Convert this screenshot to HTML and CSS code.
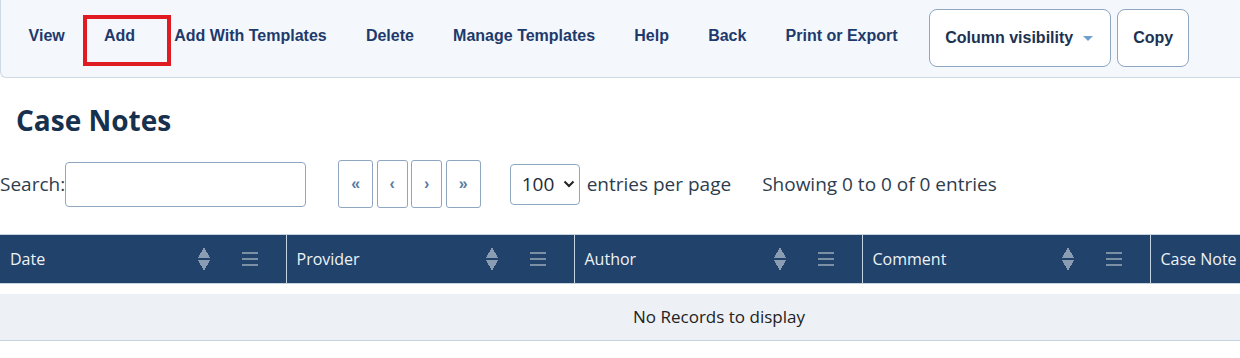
FILE: index.html
```html
<!DOCTYPE html>
<html lang="en">
<head>
    <meta charset="UTF-8">
    <meta name="viewport" content="width=device-width, initial-scale=1.0">
    <title>Case Notes</title>
    <link rel="stylesheet" href="styles.css">
</head>
<body>
    <div class="toolbar">
        <a class="nav-link" href="#">View</a>
        <a class="nav-link active" href="#">Add</a>
        <a class="nav-link" href="#">Add With Templates</a>
        <a class="nav-link" href="#">Delete</a>
        <a class="nav-link" href="#">Manage Templates</a>
        <a class="nav-link" href="#">Help</a>
        <a class="nav-link" href="#">Back</a>
        <a class="nav-link" href="#">Print or Export</a>
        <div class="tool-buttons">
            <button class="tool-btn colvis">Column visibility <span class="caret"></span></button>
            <button class="tool-btn copy">Copy</button>
        </div>
    </div>

    <h1 class="page-title">Case Notes</h1>

    <div class="controls">
        <label class="search">Search:<input type="text"></label>
        <div class="pager">
            <button class="page-btn wide">&laquo;</button>
            <button class="page-btn">&lsaquo;</button>
            <button class="page-btn">&rsaquo;</button>
            <button class="page-btn wide">&raquo;</button>
        </div>
        <div class="per-page">
            <span class="select">100
                <svg width="12" height="8" viewBox="0 0 12 8"><path d="M1.5 1.5 6 6l4.5-4.5" fill="none" stroke="#222" stroke-width="2"/></svg>
            </span>
            entries per page
        </div>
        <div class="info">Showing 0 to 0 of 0 entries</div>
    </div>

    <div class="table-wrap">
        <table class="grid">
            <colgroup>
                <col class="col-first">
                <col><col><col><col>
            </colgroup>
            <thead>
                <tr>
                    <th><div class="th-inner"><span>Date</span><span class="sort"></span><span class="menu"></span></div></th>
                    <th><div class="th-inner"><span>Provider</span><span class="sort"></span><span class="menu"></span></div></th>
                    <th><div class="th-inner"><span>Author</span><span class="sort"></span><span class="menu"></span></div></th>
                    <th><div class="th-inner"><span>Comment</span><span class="sort"></span><span class="menu"></span></div></th>
                    <th><div class="th-inner"><span>Case Note</span><span class="sort"></span><span class="menu"></span></div></th>
                </tr>
            </thead>
        </table>
        <div class="empty">No Records to display</div>
    </div>
</body>
</html>
```
FILE: styles.css
```css
body {
    margin: 0;
    font-family: "Open Sans", "Noto Sans", sans-serif;
    color: #2b3a4a;
    background: #fff;
    overflow: hidden;
}

.toolbar {
    display: flex;
    align-items: center;
    height: 78px;
    padding-left: 8px;
    background-color: #f4f7fb;
    border: 1px solid #cfd9e4;
    border-top: none;
    border-right: none;
    border-bottom-left-radius: 6px;
    box-sizing: border-box;
}

.nav-link {
    font-family: "Liberation Sans", Arial, sans-serif;
    font-weight: bold;
    font-size: 16px;
    color: #1e3a6c;
    text-decoration: none;
    padding: 0 19.6px;
    line-height: 20px;
    margin-bottom: 5px;
}

.nav-link.active {
    position: relative;
}

.nav-link.active::after {
    content: "";
    position: absolute;
    left: -1px;
    top: -11px;
    width: 80px;
    height: 43px;
    border: 4px solid #e11b22;
}

.tool-buttons {
    display: flex;
    gap: 6px;
    margin-left: 12px;
    margin-bottom: 2px;
}

.tool-btn {
    font-family: "Liberation Sans", Arial, sans-serif;
    font-weight: bold;
    font-size: 16px;
    color: #1b3252;
    background: #fff;
    border: 1px solid #8ea6c0;
    border-radius: 8px;
    height: 58px;
    padding: 0 15px;
}

.colvis {
    width: 182px;
    text-align: left;
}

.caret {
    display: inline-block;
    margin-left: 5px;
    vertical-align: middle;
    border-left: 5px solid transparent;
    border-right: 5px solid transparent;
    border-top: 5px solid #6f9fd0;
}

.copy {
    width: 72px;
}

.page-title {
    font-family: "Open Sans", "Noto Sans", sans-serif;
    font-size: 28px;
    font-weight: bold;
    color: #17304d;
    margin: 23px 0 0 16px;
    line-height: 38px;
}

.controls {
    display: flex;
    align-items: center;
    margin-top: 21px;
    font-size: 19px;
    color: #2e3d4d;
}

.search {
    display: flex;
    align-items: center;
}

.search input {
    width: 241px;
    height: 45px;
    box-sizing: border-box;
    margin-left: 0;
    border: 1px solid #8ea6c0;
    border-radius: 4px;
}

.pager {
    display: flex;
    gap: 3.5px;
    margin-left: 32px;
}

.page-btn {
    width: 31px;
    height: 48px;
    background: #fff;
    border: 1px solid #8ea6c0;
    border-radius: 3px;
    color: #5a7ba1;
    font-family: "Liberation Sans", Arial, sans-serif;
    font-weight: bold;
    font-size: 16px;
    padding: 0;
}

.page-btn.wide {
    width: 35px;
}

.per-page {
    display: flex;
    align-items: center;
    gap: 7px;
    margin-left: 29px;
}

.select {
    display: flex;
    align-items: center;
    gap: 9px;
    width: 70px;
    height: 41px;
    box-sizing: border-box;
    padding: 0 0 0 11px;
    border: 1px solid #8ea6c0;
    border-radius: 4px;
    color: #1f2a36;
    font-size: 19px;
}

.info {
    margin-left: 31px;
}

.table-wrap {
    margin-top: 26px;
    width: 1438px;
}

.grid {
    width: 1438px;
    border-collapse: collapse;
    table-layout: fixed;
    border-top: 1px solid #c5d3e2;
}

.grid col {
    width: 288px;
}

.grid col.col-first {
    width: 286px;
}

.grid th {
    background-color: #21426a;
    color: #eef2f7;
    font-weight: normal;
    font-size: 16px;
    text-align: left;
    height: 48px;
    padding: 0;
    border-left: 1px solid #c5d3e2;
    border-bottom: 1px solid #c5d3e2;
}

.grid th:first-child {
    border-left: none;
}

.th-inner {
    display: flex;
    align-items: center;
    padding: 0 28px 0 10px;
}

.th-inner span:first-child {
    flex: 1;
}

.sort {
    width: 12px;
    height: 24px;
    background:
        linear-gradient(to bottom right, transparent 50%, #8b9db2 50%) 0 0 / 6px 11px no-repeat,
        linear-gradient(to bottom left, transparent 50%, #8b9db2 50%) 6px 0 / 6px 11px no-repeat,
        linear-gradient(to top right, transparent 50%, #8b9db2 50%) 0 13px / 6px 11px no-repeat,
        linear-gradient(to top left, transparent 50%, #8b9db2 50%) 6px 13px / 6px 11px no-repeat;
}

.menu {
    width: 16px;
    height: 14px;
    margin-left: 32px;
    background: linear-gradient(#7d8fa4 0 2px, transparent 2px 6px, #7d8fa4 6px 8px, transparent 8px 12px, #7d8fa4 12px 14px);
}

.empty {
    margin-top: 10px;
    height: 46px;
    line-height: 46px;
    background-color: #edf0f5;
    border-bottom: 1px solid #c5d3e2;
    text-align: center;
    font-size: 17px;
    color: #222;
}
```
